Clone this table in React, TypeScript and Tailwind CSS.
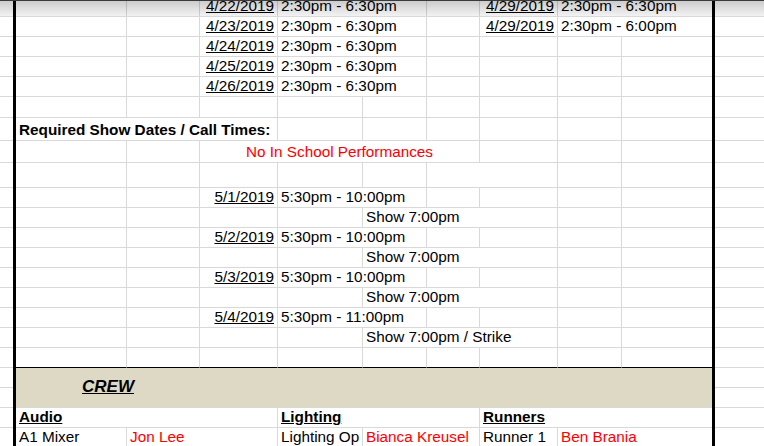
import React from "react";

type C = {
  span?: number;
  text?: string;
  align?: "left" | "right" | "center";
  red?: boolean;
  under?: boolean;
  bold?: boolean;
};

const spanCls: Record<number, string> = {
  1: "",
  2: "col-span-2",
  3: "col-span-3",
  4: "col-span-4",
};

// column widths follow the sheet's gridlines (x = 126, 199, 277, 362, 426, 479, 557, 621)
const gridCols = "grid grid-cols-[111px_73px_78px_85px_64px_53px_78px_64px_90px]";

const empty = (n: number): C[] => Array.from({ length: n }, () => ({}));

const rehearsal = (date: string, time: string, date2?: string, time2?: string): C[] => {
  const left: C[] = [{}, {}, { text: date, align: "right", under: true }, { span: 2, text: time }, {}];
  if (date2) return [...left, { text: date2, align: "right", under: true }, { span: 2, text: time2 }];
  return [...left, {}, {}, {}];
};

const showDate = (date: string, time: string): C[] => [
  {}, {}, { text: date, align: "right", under: true }, { span: 2, text: time }, {}, {}, {}, {},
];

const showTime = (text: string): C[] => [{}, {}, {}, {}, { span: 3, text }, {}, {}];

type Row = { h: string; cells: C[]; black?: boolean };

const rows: Row[] = [
  { h: "h-[21px]", cells: rehearsal("4/22/2019", "2:30pm - 6:30pm", "4/29/2019", "2:30pm - 6:30pm") },
  { h: "h-[20px]", cells: rehearsal("4/23/2019", "2:30pm - 6:30pm", "4/29/2019", "2:30pm - 6:00pm") },
  { h: "h-[20px]", cells: rehearsal("4/24/2019", "2:30pm - 6:30pm") },
  { h: "h-[20px]", cells: rehearsal("4/25/2019", "2:30pm - 6:30pm") },
  { h: "h-[20px]", cells: rehearsal("4/26/2019", "2:30pm - 6:30pm") },
  { h: "h-[21px]", cells: empty(9) },
  { h: "h-[23px]", cells: [{ span: 3, text: "Required Show Dates / Call Times:", bold: true }, ...empty(6)] },
  { h: "h-[22px]", cells: [{}, {}, { span: 4, text: "No In School Performances", align: "center", red: true }, {}, {}, {}] },
  { h: "h-[25px]", cells: [{}, {}, {}, {}, {}, { span: 2 }, {}, {}] },
  { h: "h-[20px]", cells: showDate("5/1/2019", "5:30pm - 10:00pm") },
  { h: "h-[20px]", cells: showTime("Show 7:00pm") },
  { h: "h-[20px]", cells: showDate("5/2/2019", "5:30pm - 10:00pm") },
  { h: "h-[20px]", cells: showTime("Show 7:00pm") },
  { h: "h-[20px]", cells: showDate("5/3/2019", "5:30pm - 10:00pm") },
  { h: "h-[20px]", cells: showTime("Show 7:00pm") },
  { h: "h-[20px]", cells: showDate("5/4/2019", "5:30pm - 11:00pm") },
  { h: "h-[20px]", cells: showTime("Show 7:00pm / Strike") },
  { h: "h-[20px]", cells: empty(9), black: true },
];

const crewRows: Row[] = [
  {
    h: "h-[20px]",
    cells: [
      { span: 3, text: "Audio", bold: true, under: true },
      { span: 3, text: "Lighting", bold: true, under: true },
      { span: 3, text: "Runners", bold: true, under: true },
    ],
  },
  {
    h: "h-[20px]",
    cells: [
      { text: "A1 Mixer" },
      { span: 2, text: "Jon Lee", red: true },
      { text: "Lighting Op" },
      { span: 2, text: "Bianca Kreusel", red: true },
      { text: "Runner 1" },
      { span: 2, text: "Ben Brania", red: true },
    ],
  },
];

// stub rows outside the thick borders, one per sheet row (the crew band is two rows there)
const stubHeights = [
  "h-[21px]", "h-[20px]", "h-[20px]", "h-[20px]", "h-[20px]", "h-[21px]", "h-[23px]", "h-[22px]", "h-[25px]",
  "h-[20px]", "h-[20px]", "h-[20px]", "h-[20px]", "h-[20px]", "h-[20px]", "h-[20px]", "h-[20px]",
  "h-[20px]", "h-[20px]", "h-[20px]", "h-[20px]", "h-[20px]",
];

function SheetRow({ row }: { row: Row }) {
  let used = 0;
  return (
    <div className={`${gridCols} ${row.h}`}>
      {row.cells.map((c, i) => {
        used += c.span ?? 1;
        const last = used === 9;
        const justify =
          c.align === "right" ? "justify-end" : c.align === "center" ? "justify-center" : "justify-start";
        return (
          <div
            key={i}
            className={`flex items-end pb-[2px] px-[3px] leading-[17px] whitespace-nowrap overflow-visible border-b ${
              row.black ? "border-b-black" : "border-b-[#d9d9d9]"
            } ${last ? "" : "border-r border-r-[#d9d9d9]"} ${spanCls[c.span ?? 1]} ${justify}`}
          >
            {c.text && (
              <span
                className={`${c.red ? "text-[#ff0000]" : "text-black"} ${c.bold ? "font-bold" : ""} ${
                  c.under ? "underline" : ""
                }`}
              >
                {c.text}
              </span>
            )}
          </div>
        );
      })}
    </div>
  );
}

function Stub({ className }: { className: string }) {
  return (
    <div className={className}>
      <div className="flex flex-col">
        {stubHeights.map((h, i) => (
          <div key={i} className={`${h} border-b border-b-[#d9d9d9]`} />
        ))}
      </div>
    </div>
  );
}

export default function App() {
  return (
    <div className="relative w-[764px] h-[446px] overflow-hidden bg-white font-['Liberation_Sans',Arial,sans-serif] text-[15.3px] text-black">
      <div className="flex -mt-[4px]">
        <Stub className="w-[13px] shrink-0" />

        <div className="w-[702px] shrink-0 border-x-[3px] border-black flex flex-col">
          {rows.map((r, i) => (
            <SheetRow key={i} row={r} />
          ))}

          {/* crew band */}
          <div className="h-[40px] bg-[#ddd9c4] border-b border-b-[#d9d9d9] flex">
            <div className="w-[184px] flex items-center justify-center pb-[1px]">
              <span className="text-[17px] font-bold italic underline">CREW</span>
            </div>
          </div>

          {crewRows.map((r, i) => (
            <SheetRow key={i} row={r} />
          ))}
        </div>

        <Stub className="flex-1" />
      </div>

      {/* frozen-row shadow along the top edge */}
      <div className="absolute inset-x-0 top-0 h-[16px] border-t border-t-[#3a3a3a] bg-linear-to-b from-[rgba(0,0,0,0.2)] to-[rgba(0,0,0,0.05)] pointer-events-none" />
    </div>
  );
}
